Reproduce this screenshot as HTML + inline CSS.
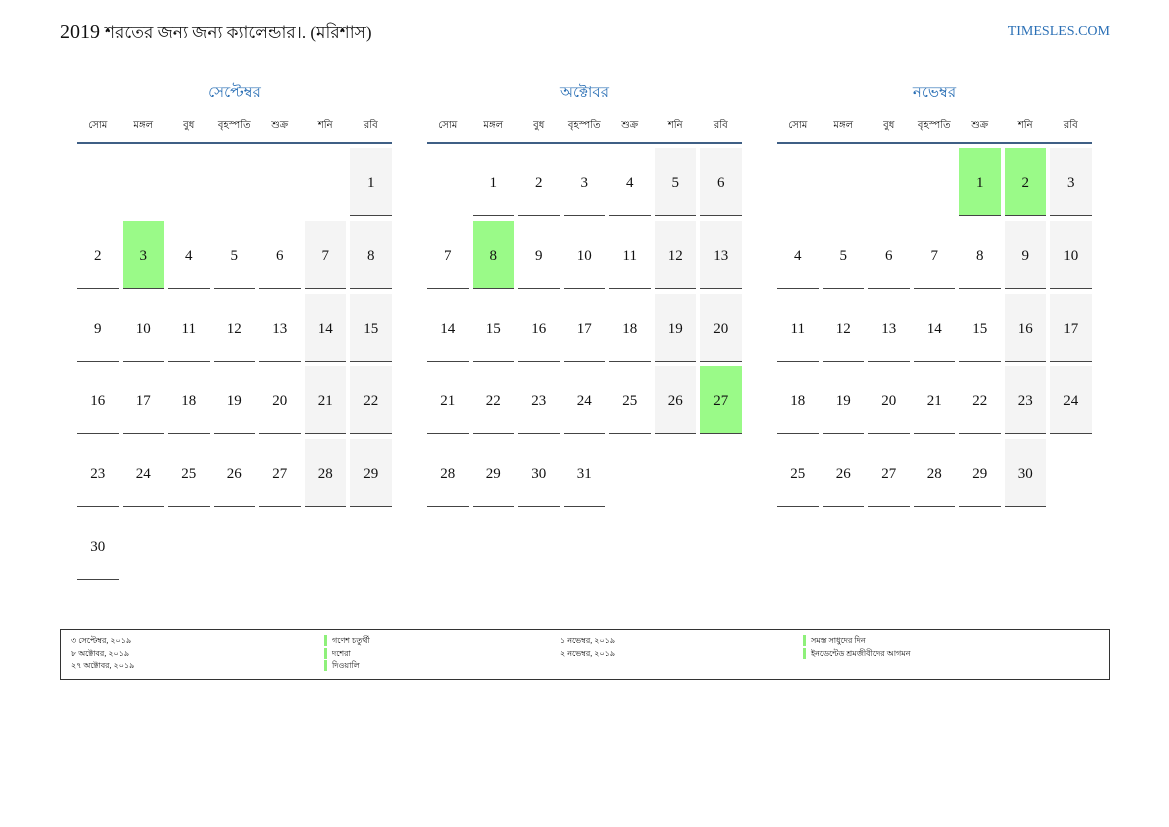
<!DOCTYPE html>
<html><head><meta charset="utf-8">
<style>
body{margin:0;width:1169px;height:827px;background:#fff;font-family:"Liberation Serif",serif;color:#111;position:relative;overflow:hidden}
.title{position:absolute;left:60px;top:20px;font-size:20px;white-space:nowrap}
.title .bn{font-size:17px}
.site{position:absolute;right:59px;top:24px;font-size:14px;color:#2a6fb5}
.m{position:absolute;top:82px;width:315px}
.mt{text-align:center;color:#2a6fb5;font-size:15px;height:22px;line-height:22px}
.dn{display:grid;grid-template-columns:repeat(7,45.5px);font-size:10px;height:38px;line-height:44px;border-bottom:2px solid #3f5f85;text-align:center}
.dn span{width:41.5px}
.g{display:grid;grid-template-columns:repeat(7,45.5px);grid-auto-rows:72.8px;margin-top:4px}
.c{width:41.5px;height:67px;border-bottom:1.5px solid #444;text-align:center;line-height:70px;font-size:15px;box-sizing:content-box}
.e{border:none}
.w{background:#f4f4f4}
.h{background:#9afa88}
.lg{position:absolute;left:60px;top:629px;width:1048px;height:49px;border:1.5px solid #333;font-size:8px}
.lg div{position:absolute;line-height:12.5px}
.lg .b{position:static;border-left:3px solid #8ef07a;padding-left:5px;line-height:11px;margin-bottom:1.5px}
</style></head><body>
<div class="title">2019 <span class="bn">শরতের জন্য জন্য ক্যালেন্ডার।. (মরিশাস)</span></div>
<div class="site">TIMESLES.COM</div>

<div class="m" style="left:77px"><div class="mt">সেপ্টেম্বর</div>
<div class="dn"><span>সোম</span><span>মঙ্গল</span><span>বুধ</span><span>বৃহস্পতি</span><span>শুক্র</span><span>শনি</span><span>রবি</span></div>
<div class="g">
<div class="c e"></div><div class="c e"></div><div class="c e"></div><div class="c e"></div><div class="c e"></div><div class="c e"></div><div class="c w">1</div>
<div class="c">2</div><div class="c h">3</div><div class="c">4</div><div class="c">5</div><div class="c">6</div><div class="c w">7</div><div class="c w">8</div>
<div class="c">9</div><div class="c">10</div><div class="c">11</div><div class="c">12</div><div class="c">13</div><div class="c w">14</div><div class="c w">15</div>
<div class="c">16</div><div class="c">17</div><div class="c">18</div><div class="c">19</div><div class="c">20</div><div class="c w">21</div><div class="c w">22</div>
<div class="c">23</div><div class="c">24</div><div class="c">25</div><div class="c">26</div><div class="c">27</div><div class="c w">28</div><div class="c w">29</div>
<div class="c">30</div>
</div></div>

<div class="m" style="left:427px"><div class="mt">অক্টোবর</div>
<div class="dn"><span>সোম</span><span>মঙ্গল</span><span>বুধ</span><span>বৃহস্পতি</span><span>শুক্র</span><span>শনি</span><span>রবি</span></div>
<div class="g">
<div class="c e"></div><div class="c">1</div><div class="c">2</div><div class="c">3</div><div class="c">4</div><div class="c w">5</div><div class="c w">6</div>
<div class="c">7</div><div class="c h">8</div><div class="c">9</div><div class="c">10</div><div class="c">11</div><div class="c w">12</div><div class="c w">13</div>
<div class="c">14</div><div class="c">15</div><div class="c">16</div><div class="c">17</div><div class="c">18</div><div class="c w">19</div><div class="c w">20</div>
<div class="c">21</div><div class="c">22</div><div class="c">23</div><div class="c">24</div><div class="c">25</div><div class="c w">26</div><div class="c h">27</div>
<div class="c">28</div><div class="c">29</div><div class="c">30</div><div class="c">31</div>
</div></div>

<div class="m" style="left:777px"><div class="mt">নভেম্বর</div>
<div class="dn"><span>সোম</span><span>মঙ্গল</span><span>বুধ</span><span>বৃহস্পতি</span><span>শুক্র</span><span>শনি</span><span>রবি</span></div>
<div class="g">
<div class="c e"></div><div class="c e"></div><div class="c e"></div><div class="c e"></div><div class="c h">1</div><div class="c h">2</div><div class="c w">3</div>
<div class="c">4</div><div class="c">5</div><div class="c">6</div><div class="c">7</div><div class="c">8</div><div class="c w">9</div><div class="c w">10</div>
<div class="c">11</div><div class="c">12</div><div class="c">13</div><div class="c">14</div><div class="c">15</div><div class="c w">16</div><div class="c w">17</div>
<div class="c">18</div><div class="c">19</div><div class="c">20</div><div class="c">21</div><div class="c">22</div><div class="c w">23</div><div class="c w">24</div>
<div class="c">25</div><div class="c">26</div><div class="c">27</div><div class="c">28</div><div class="c">29</div><div class="c w">30</div>
</div></div>

<div class="lg">
<div style="left:10px;top:5px">৩ সেপ্টেম্বর, ২০১৯<br>৮ অক্টোবর, ২০১৯<br>২৭ অক্টোবর, ২০১৯</div>
<div style="left:263px;top:5px"><div class="b">গণেশ চতুর্থী</div><div class="b">দশেরা</div><div class="b">দিওয়ালি</div></div>
<div style="left:499px;top:5px">১ নভেম্বর, ২০১৯<br>২ নভেম্বর, ২০১৯</div>
<div style="left:742px;top:5px"><div class="b">সমস্ত সাধুদের দিন</div><div class="b">ইনডেন্টেড শ্রমজীবীদের আগমন</div></div>
</div>
</body></html>
